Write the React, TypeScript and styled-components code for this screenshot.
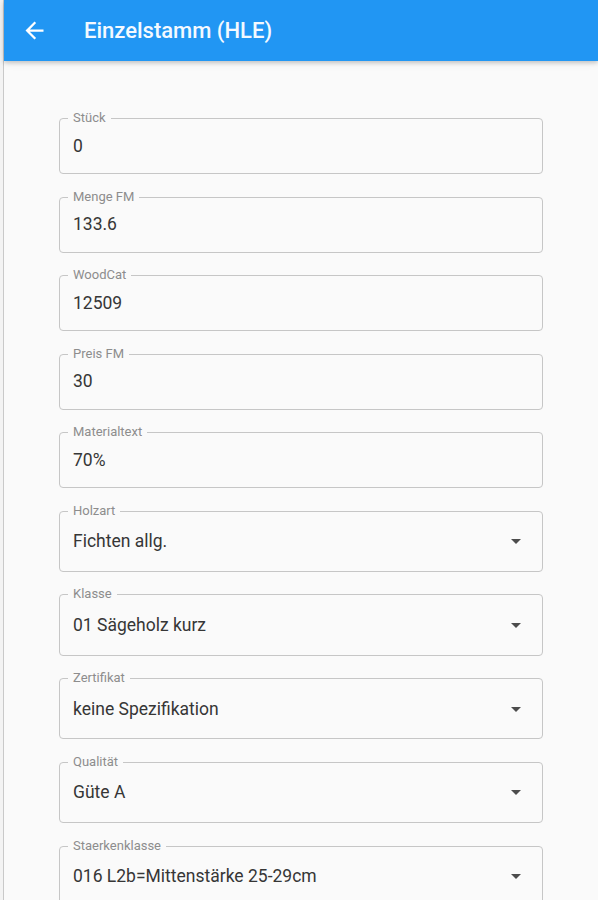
import styled, { createGlobalStyle } from 'styled-components';

const GlobalStyle = createGlobalStyle`
  html, body {
    margin: 0;
    padding: 0;
    background: #fafafa;
    font-family: Roboto, "Liberation Sans", Arial, sans-serif;
  }
`;

const Page = styled.div`
  display: flex;
  min-height: 900px;
  overflow: hidden;
`;

const EdgeStrip = styled.div`
  width: 3px;
  flex-shrink: 0;
  background: #f3f3f3;
  border-right: 1px solid #c9c9c9;
`;

const Panel = styled.div`
  flex: 1;
  display: flex;
  flex-direction: column;
  background: #fafafa;
`;

const AppBar = styled.header`
  height: 61px;
  display: flex;
  align-items: center;
  background-color: #2196f3;
  color: #ffffff;
  box-shadow: 0 2px 4px rgba(0, 0, 0, 0.18), 0 1px 10px rgba(0, 0, 0, 0.08);
  position: relative;
  z-index: 1;
`;

const BackButton = styled.button`
  width: 27px;
  height: 27px;
  margin-left: 17px;
  padding: 0;
  border: none;
  background: none;
  color: #ffffff;
  display: flex;
  cursor: pointer;
`;

const Title = styled.h1`
  margin: 0 0 0 36px;
  font-size: 22px;
  font-weight: 500;
  letter-spacing: 0px;
  color: #f4f9ff;
`;

const Form = styled.div`
  display: flex;
  flex-direction: column;
  gap: 22.5px;
  padding: 57px 55px 0 55px;
`;

const Field = styled.div<{ $select?: boolean }>`
  position: relative;
  box-sizing: border-box;
  height: ${(p) => (p.$select ? '61.25px' : '56px')};
  display: flex;
  align-items: center;
  padding: ${(p) => (p.$select ? '0 14px 0 13px' : '0 13px')};
  border: 1px solid #c6c6c6;
  border-radius: 4px;
`;

const Label = styled.span`
  position: absolute;
  top: -9px;
  left: 8px;
  padding: 0 5px;
  background: #fafafa;
  font-size: 13px;
  line-height: 16px;
  color: #8d8d8d;
`;

const Value = styled.span<{ $select?: boolean }>`
  flex: 1;
  margin-top: ${(p) => (p.$select ? '0' : '-1px')};
  font-size: 17.5px;
  color: #363636;
  white-space: nowrap;
  overflow: hidden;
`;

const DropIcon = styled.svg`
  width: 24px;
  height: 24px;
  flex-shrink: 0;
  fill: #4c4c4c;
`;

type FieldData = { label: string; value: string; select?: boolean };

const fields: FieldData[] = [
  { label: 'Stück', value: '0' },
  { label: 'Menge FM', value: '133.6' },
  { label: 'WoodCat', value: '12509' },
  { label: 'Preis FM', value: '30' },
  { label: 'Materialtext', value: '70%' },
  { label: 'Holzart', value: 'Fichten allg.', select: true },
  { label: 'Klasse', value: '01 Sägeholz kurz', select: true },
  { label: 'Zertifikat', value: 'keine Spezifikation', select: true },
  { label: 'Qualität', value: 'Güte A', select: true },
  { label: 'Staerkenklasse', value: '016 L2b=Mittenstärke 25-29cm', select: true },
];

const App = () => {
  return (
    <>
      <GlobalStyle />
      <Page>
        <EdgeStrip />
        <Panel>
          <AppBar>
            <BackButton aria-label="Zurück">
              <svg viewBox="0 0 24 24" width="27" height="27" fill="currentColor">
                <path d="M20 11H7.83l5.59-5.59L12 4l-8 8 8 8 1.41-1.41L7.83 13H20v-2z" />
              </svg>
            </BackButton>
            <Title>Einzelstamm (HLE)</Title>
          </AppBar>
          <Form>
            {fields.map((f) => (
              <Field key={f.label} $select={f.select}>
                <Label>{f.label}</Label>
                <Value $select={f.select}>{f.value}</Value>
                {f.select && (
                  <DropIcon viewBox="0 0 24 24">
                    <path d="M7 10l5 5 5-5z" />
                  </DropIcon>
                )}
              </Field>
            ))}
          </Form>
        </Panel>
      </Page>
    </>
  );
};

export default App;
